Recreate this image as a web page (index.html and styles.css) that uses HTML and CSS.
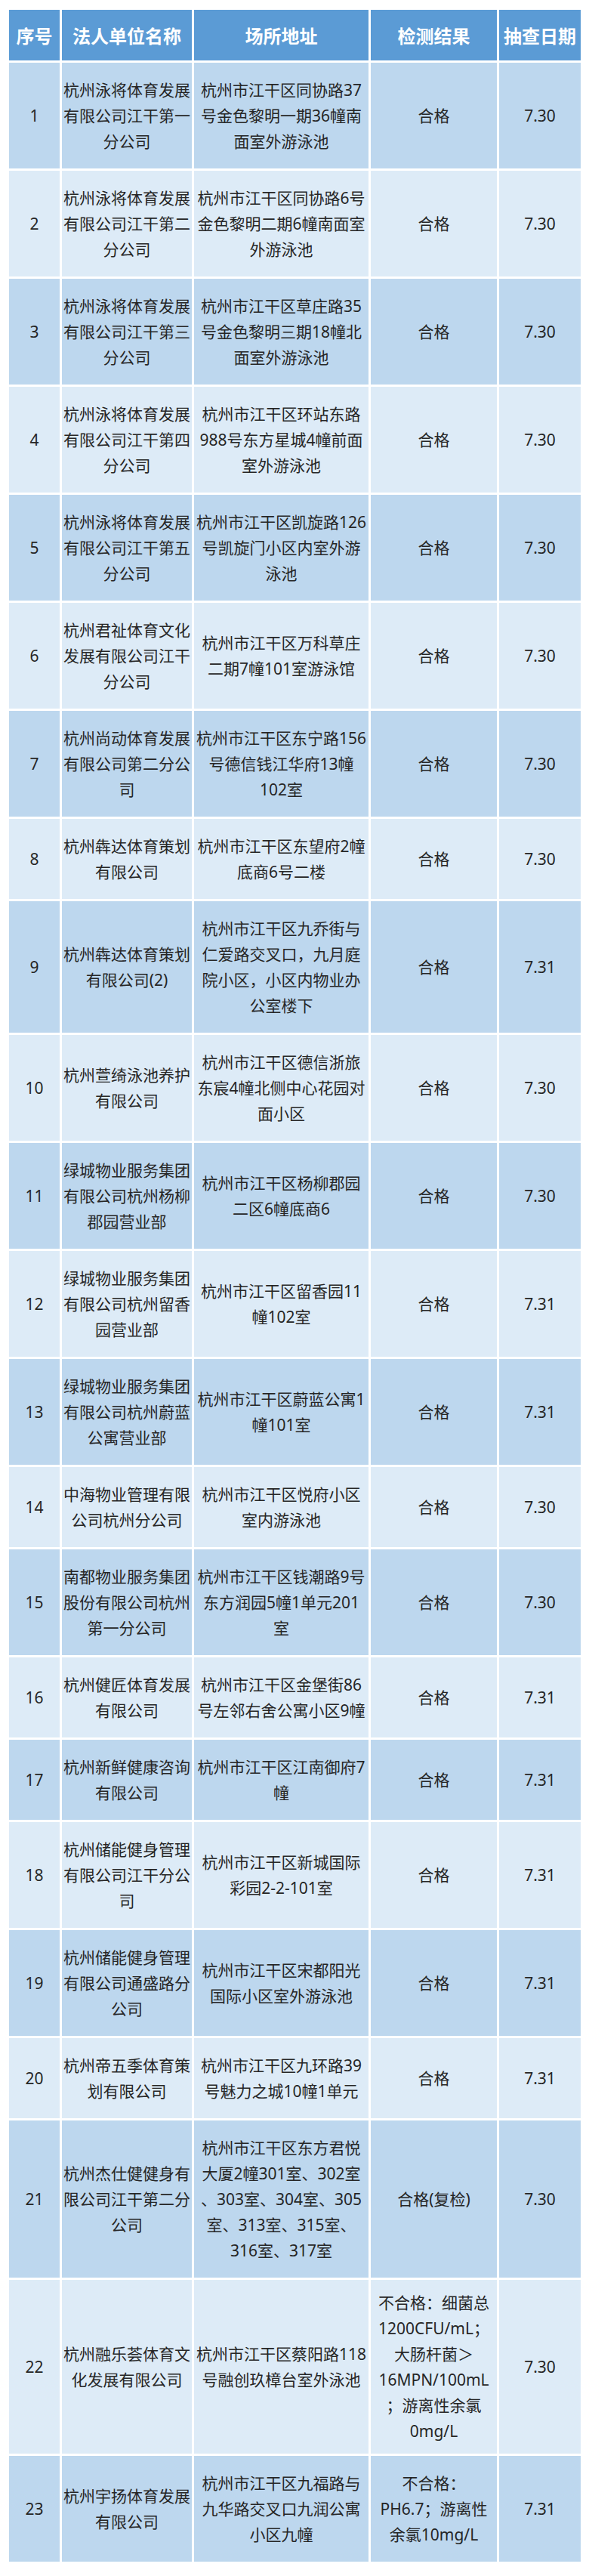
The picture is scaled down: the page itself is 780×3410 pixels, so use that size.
FILE: index.html
```html
<!DOCTYPE html>
<html lang="zh-CN">
<head>
<meta charset="utf-8">
<title>游泳场所抽查结果</title>
<link rel="stylesheet" href="styles.css">
</head>
<body>
<table class="report">
  <colgroup>
    <col class="c-no"><col class="c-name"><col class="c-addr"><col class="c-result"><col class="c-date">
  </colgroup>
  <thead>
    <tr><th>序号</th><th>法人单位名称</th><th>场所地址</th><th>检测结果</th><th>抽查日期</th></tr>
  </thead>
  <tbody>
    <tr><td>1</td><td>杭州泳将体育发展<br>有限公司江干第一<br>分公司</td><td>杭州市江干区同协路37<br>号金色黎明一期36幢南<br>面室外游泳池</td><td>合格</td><td>7.30</td></tr>
    <tr><td>2</td><td>杭州泳将体育发展<br>有限公司江干第二<br>分公司</td><td>杭州市江干区同协路6号<br>金色黎明二期6幢南面室<br>外游泳池</td><td>合格</td><td>7.30</td></tr>
    <tr><td>3</td><td>杭州泳将体育发展<br>有限公司江干第三<br>分公司</td><td>杭州市江干区草庄路35<br>号金色黎明三期18幢北<br>面室外游泳池</td><td>合格</td><td>7.30</td></tr>
    <tr><td>4</td><td>杭州泳将体育发展<br>有限公司江干第四<br>分公司</td><td>杭州市江干区环站东路<br>988号东方星城4幢前面<br>室外游泳池</td><td>合格</td><td>7.30</td></tr>
    <tr><td>5</td><td>杭州泳将体育发展<br>有限公司江干第五<br>分公司</td><td>杭州市江干区凯旋路126<br>号凯旋门小区内室外游<br>泳池</td><td>合格</td><td>7.30</td></tr>
    <tr><td>6</td><td>杭州君祉体育文化<br>发展有限公司江干<br>分公司</td><td>杭州市江干区万科草庄<br>二期7幢101室游泳馆</td><td>合格</td><td>7.30</td></tr>
    <tr><td>7</td><td>杭州尚动体育发展<br>有限公司第二分公<br>司</td><td>杭州市江干区东宁路156<br>号德信钱江华府13幢<br>102室</td><td>合格</td><td>7.30</td></tr>
    <tr><td>8</td><td>杭州犇达体育策划<br>有限公司</td><td>杭州市江干区东望府2幢<br>底商6号二楼</td><td>合格</td><td>7.30</td></tr>
    <tr><td>9</td><td>杭州犇达体育策划<br>有限公司(2)</td><td>杭州市江干区九乔街与<br>仁爱路交叉口，九月庭<br>院小区，小区内物业办<br>公室楼下</td><td>合格</td><td>7.31</td></tr>
    <tr><td>10</td><td>杭州萱绮泳池养护<br>有限公司</td><td>杭州市江干区德信浙旅<br>东宸4幢北侧中心花园对<br>面小区</td><td>合格</td><td>7.30</td></tr>
    <tr><td>11</td><td>绿城物业服务集团<br>有限公司杭州杨柳<br>郡园营业部</td><td>杭州市江干区杨柳郡园<br>二区6幢底商6</td><td>合格</td><td>7.30</td></tr>
    <tr><td>12</td><td>绿城物业服务集团<br>有限公司杭州留香<br>园营业部</td><td>杭州市江干区留香园11<br>幢102室</td><td>合格</td><td>7.31</td></tr>
    <tr><td>13</td><td>绿城物业服务集团<br>有限公司杭州蔚蓝<br>公寓营业部</td><td>杭州市江干区蔚蓝公寓1<br>幢101室</td><td>合格</td><td>7.31</td></tr>
    <tr><td>14</td><td>中海物业管理有限<br>公司杭州分公司</td><td>杭州市江干区悦府小区<br>室内游泳池</td><td>合格</td><td>7.30</td></tr>
    <tr><td>15</td><td>南都物业服务集团<br>股份有限公司杭州<br>第一分公司</td><td>杭州市江干区钱潮路9号<br>东方润园5幢1单元201<br>室</td><td>合格</td><td>7.30</td></tr>
    <tr><td>16</td><td>杭州健匠体育发展<br>有限公司</td><td>杭州市江干区金堡街86<br>号左邻右舍公寓小区9幢</td><td>合格</td><td>7.31</td></tr>
    <tr><td>17</td><td>杭州新鲜健康咨询<br>有限公司</td><td>杭州市江干区江南御府7<br>幢</td><td>合格</td><td>7.31</td></tr>
    <tr><td>18</td><td>杭州储能健身管理<br>有限公司江干分公<br>司</td><td>杭州市江干区新城国际<br>彩园2-2-101室</td><td>合格</td><td>7.31</td></tr>
    <tr><td>19</td><td>杭州储能健身管理<br>有限公司通盛路分<br>公司</td><td>杭州市江干区宋都阳光<br>国际小区室外游泳池</td><td>合格</td><td>7.31</td></tr>
    <tr><td>20</td><td>杭州帝五季体育策<br>划有限公司</td><td>杭州市江干区九环路39<br>号魅力之城10幢1单元</td><td>合格</td><td>7.31</td></tr>
    <tr><td>21</td><td>杭州杰仕健健身有<br>限公司江干第二分<br>公司</td><td>杭州市江干区东方君悦<br>大厦2幢301室、302室<br>、303室、304室、305<br>室、313室、315室、<br>316室、317室</td><td>合格(复检)</td><td>7.30</td></tr>
    <tr class="tight"><td>22</td><td>杭州融乐荟体育文<br>化发展有限公司</td><td>杭州市江干区蔡阳路118<br>号融创玖樟台室外泳池</td><td>不合格：细菌总<br>1200CFU/mL；<br>大肠杆菌＞<br>16MPN/100mL<br>；游离性余氯<br>0mg/L</td><td>7.30</td></tr>
    <tr><td>23</td><td>杭州宇扬体育发展<br>有限公司</td><td>杭州市江干区九福路与<br>九华路交叉口九润公寓<br>小区九幢</td><td>不合格：<br>PH6.7；游离性<br>余氯10mg/L</td><td>7.31</td></tr>
  </tbody>
</table>
</body>
</html>
```

FILE: styles.css
```css
html, body {
  margin: 0;
  padding: 0;
  background: #ffffff;
}

body {
  font-family: "Noto Sans", "Noto Sans CJK SC", sans-serif;
  color: #262626;
}

.report {
  margin: 10px 0 0 9px;
  width: 763px;
  table-layout: fixed;
  border-collapse: separate;
  border-spacing: 3px;
}

.c-no { width: 67px; }
.c-name { width: 172px; }
.c-addr { width: 231px; }
.c-result { width: 167px; }
.c-date { width: 108px; }

.report th {
  height: 67px;
  padding: 0;
  background: #5b9bd5;
  color: #ffffff;
  font-family: "Noto Sans CJK SC", sans-serif;
  font-weight: 700;
  font-size: 24px;
  line-height: 30px;
  text-align: center;
  vertical-align: middle;
  white-space: nowrap;
}

.report td {
  padding: 19px 0;
  font-size: 21px;
  line-height: 34px;
  text-align: center;
  vertical-align: middle;
  white-space: nowrap;
  overflow: visible;
}

.report tbody tr:nth-child(odd) td {
  background: #bdd7ee;
}

.report tbody tr:nth-child(even) td {
  background: #ddebf7;
}

.report tr.tight td {
  padding: 13px 0;
}
```
